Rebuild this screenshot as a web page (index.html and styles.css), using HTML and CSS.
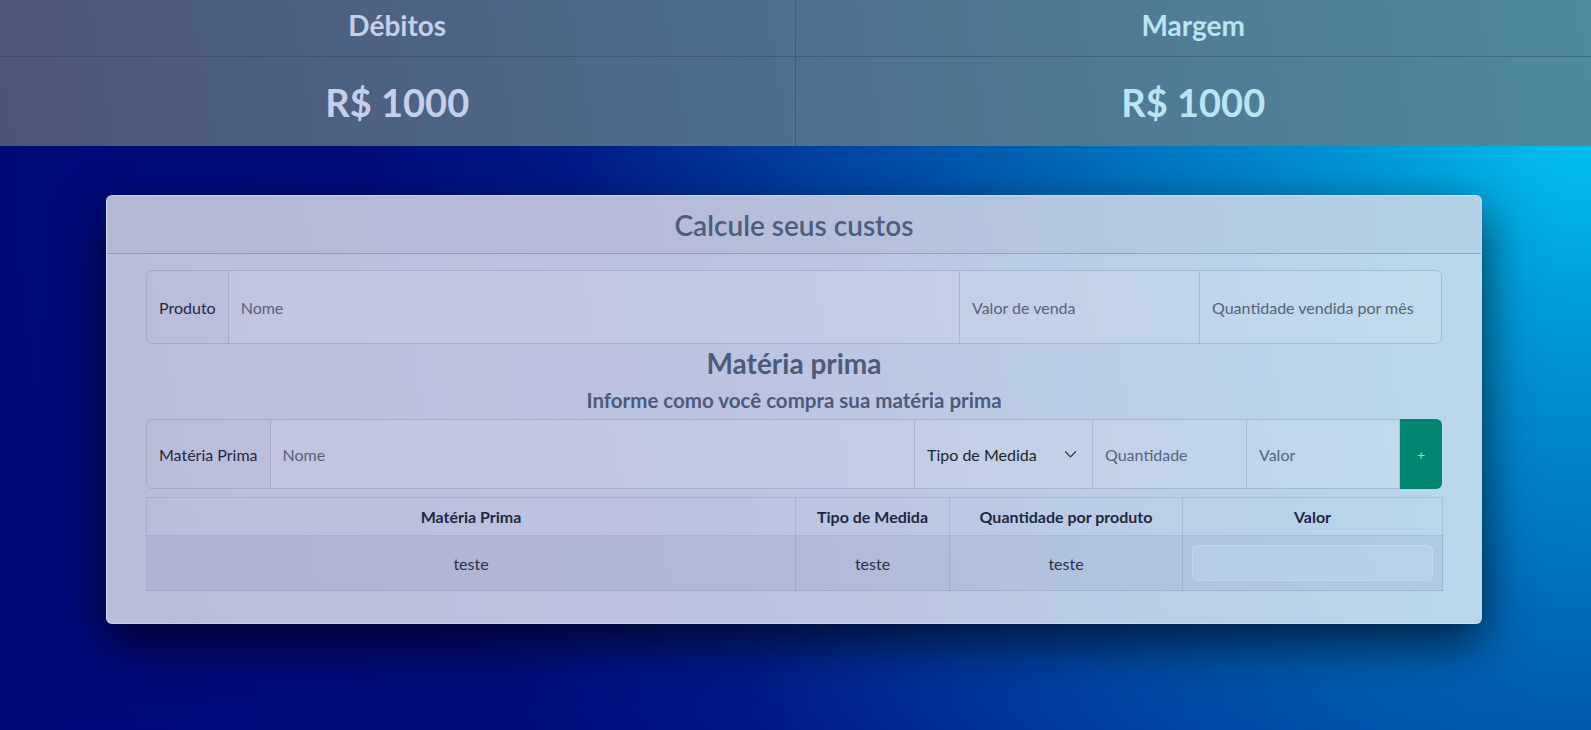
FILE: index.html
```html
<!DOCTYPE html>
<html lang="pt-BR">
<head>
<meta charset="utf-8">
<title>Calcule seus custos</title>
<link rel="stylesheet" href="styles.css">
</head>
<body>
<header class="summary">
  <div class="summary-col debits">
    <div class="summary-head">Débitos</div>
    <div class="summary-value">R$ 1000</div>
  </div>
  <div class="summary-col margin">
    <div class="summary-head">Margem</div>
    <div class="summary-value">R$ 1000</div>
  </div>
</header>

<main class="card">
  <div class="card-header">
    <h3 class="card-title">Calcule seus custos</h3>
  </div>
  <div class="card-body">
    <div class="input-group group-product">
      <span class="ig-label">Produto</span>
      <input class="ig-input" type="text" placeholder="Nome">
      <input class="ig-input" type="text" placeholder="Valor de venda">
      <input class="ig-input" type="text" placeholder="Quantidade vendida por mês">
    </div>

    <h3 class="section-title">Matéria prima</h3>
    <h5 class="section-sub">Informe como você compra sua matéria prima</h5>

    <div class="input-group group-material">
      <span class="ig-label">Matéria Prima</span>
      <input class="ig-input" type="text" placeholder="Nome">
      <div class="ig-select">
        <span>Tipo de Medida</span>
        <svg class="chev" width="11" height="7" viewBox="1.5 4.5 13 7.5"><path d="m2 5 6 6 6-6" fill="none" stroke="#343a40" stroke-linecap="round" stroke-linejoin="round" stroke-width="1.5"/></svg>
      </div>
      <input class="ig-input" type="text" placeholder="Quantidade">
      <input class="ig-input" type="text" placeholder="Valor">
      <button class="ig-btn" type="button">+</button>
    </div>

    <table class="materials">
      <colgroup>
        <col class="c1"><col class="c2"><col class="c3"><col class="c4">
      </colgroup>
      <thead>
        <tr><th>Matéria Prima</th><th>Tipo de Medida</th><th>Quantidade por produto</th><th>Valor</th></tr>
      </thead>
      <tbody>
        <tr><td>teste</td><td>teste</td><td>teste</td><td><input class="cell-input" type="text"></td></tr>
      </tbody>
    </table>
  </div>
</main>
</body>
</html>
```

FILE: styles.css
```css
* { box-sizing: border-box; }

html, body { margin: 0; padding: 0; }

body {
  min-height: 730px;
  font-family: Lato, "Open Sans", sans-serif;
  font-size: 16px;
  color: #212529;
  background:
    radial-gradient(circle farthest-corner at 100% 14%,
      #00c6f4 0%, #0096d6 14%, #0068b8 31%, #0040a0 46%, #001a88 60%, #000c7c 72%, #00087a 100%);
  overflow: hidden;
}

/* top summary */
.summary {
  display: grid;
  grid-template-columns: 1fr 1fr;
  height: 146px;
  background: linear-gradient(80deg, #4c5577 0%, #4e6f8e 50%, #4f8b9b 100%);
}
.summary-col { display: flex; flex-direction: column; }
.summary-col.debits { border-right: 1px solid rgba(40, 55, 85, 0.35); }
.summary-head {
  height: 57px;
  border-bottom: 1px solid rgba(40, 55, 85, 0.35);
  display: flex;
  align-items: center;
  justify-content: center;
  padding-bottom: 7px;
  font-size: 28px;
  font-weight: 700;
}
.summary-value {
  flex: 1;
  display: flex;
  align-items: center;
  justify-content: center;
  font-size: 38px;
  font-weight: 700;
}
.debits { color: #c5cfe9; }
.margin { color: #b9e5f3; }

/* card */
.card {
  width: 1376px;
  margin: 49px 0 0 106px;
  border-radius: 6px;
  border: 1px solid rgba(255, 255, 255, 0.25);
  background: linear-gradient(80deg, #babdda 0%, #bcc3e0 45%, #b9d9ec 100%);
  box-shadow: 0 18px 50px rgba(0, 0, 10, 0.7);
  overflow: hidden;
}
.card-header {
  height: 58px;
  background: rgba(0, 0, 40, 0.03);
  border-bottom: 1px solid rgba(70, 80, 120, 0.3);
  display: flex;
  align-items: center;
  justify-content: center;
}
.card-title {
  margin: 0;
  font-size: 28px;
  font-weight: 600;
  color: #4b5e7d;
}
.card-body {
  padding: 16px 39px 32px;
}

/* input groups */
.input-group {
  display: grid;
  border: 1px solid rgba(80, 95, 140, 0.22);
  border-radius: 6px;
}
.group-product {
  height: 74px;
  grid-template-columns: auto 1fr 240px 241px;
}
.group-material {
  height: 70px;
  margin-top: 7px;
  grid-template-columns: auto 1fr 178px 154px 153px 41px;
}
.ig-label {
  display: flex;
  align-items: center;
  padding: 0 12px;
  color: #25293d;
  border-right: 1px solid rgba(80, 95, 140, 0.22);
}
.ig-input {
  min-width: 0;
  border: 0;
  border-right: 1px solid rgba(80, 95, 140, 0.22);
  padding: 0 12px;
  background: rgba(255, 255, 255, 0.1);
  font: inherit;
  color: #212529;
  outline: none;
}
.ig-input::placeholder { color: #56637c; opacity: 1; }
.group-product .ig-input:last-child { border-right: 0; border-radius: 0 5px 5px 0; }

.ig-select {
  display: flex;
  align-items: center;
  justify-content: space-between;
  padding: 0 16px 0 12px;
  border-right: 1px solid rgba(80, 95, 140, 0.22);
  background: rgba(255, 255, 255, 0.1);
  color: #212529;
}
.chev { display: block; }
.ig-btn {
  border: 0;
  margin: -1px -1px -1px 0;
  border-radius: 0 6px 6px 0;
  background: #00856f;
  color: #9fd6c8;
  font: inherit;
  font-size: 14px;
  padding: 0;
  cursor: pointer;
}

/* headings */
.section-title {
  margin: 2px 0 0;
  text-align: center;
  font-size: 28px;
  line-height: 34px;
  font-weight: 700;
  color: #4b5c7b;
}
.section-sub {
  margin: 8px 0 0;
  text-align: center;
  font-size: 20.5px;
  line-height: 24px;
  font-weight: 700;
  color: #4b5c7b;
}

/* table */
.materials {
  width: 100%;
  margin-top: 8px;
  border-collapse: collapse;
  table-layout: fixed;
  border: 1px solid rgba(80, 95, 140, 0.2);
}
.c1 { width: 649px; }
.c2 { width: 154px; }
.c3 { width: 233px; }
.c4 { width: 260px; }
.materials th, .materials td {
  border: 1px solid rgba(80, 95, 140, 0.17);
  text-align: center;
  vertical-align: middle;
}
.materials th {
  height: 38px;
  font-weight: 700;
  color: #1e2942;
}
.materials td {
  height: 55px;
  padding: 0 9px;
  color: #28304a;
  background: rgba(20, 30, 80, 0.06);
}
.cell-input {
  display: block;
  width: 100%;
  height: 36px;
  border: 1px solid rgba(255, 255, 255, 0.18);
  border-radius: 6px;
  background: rgba(200, 225, 255, 0.3);
  outline: none;
}
```
